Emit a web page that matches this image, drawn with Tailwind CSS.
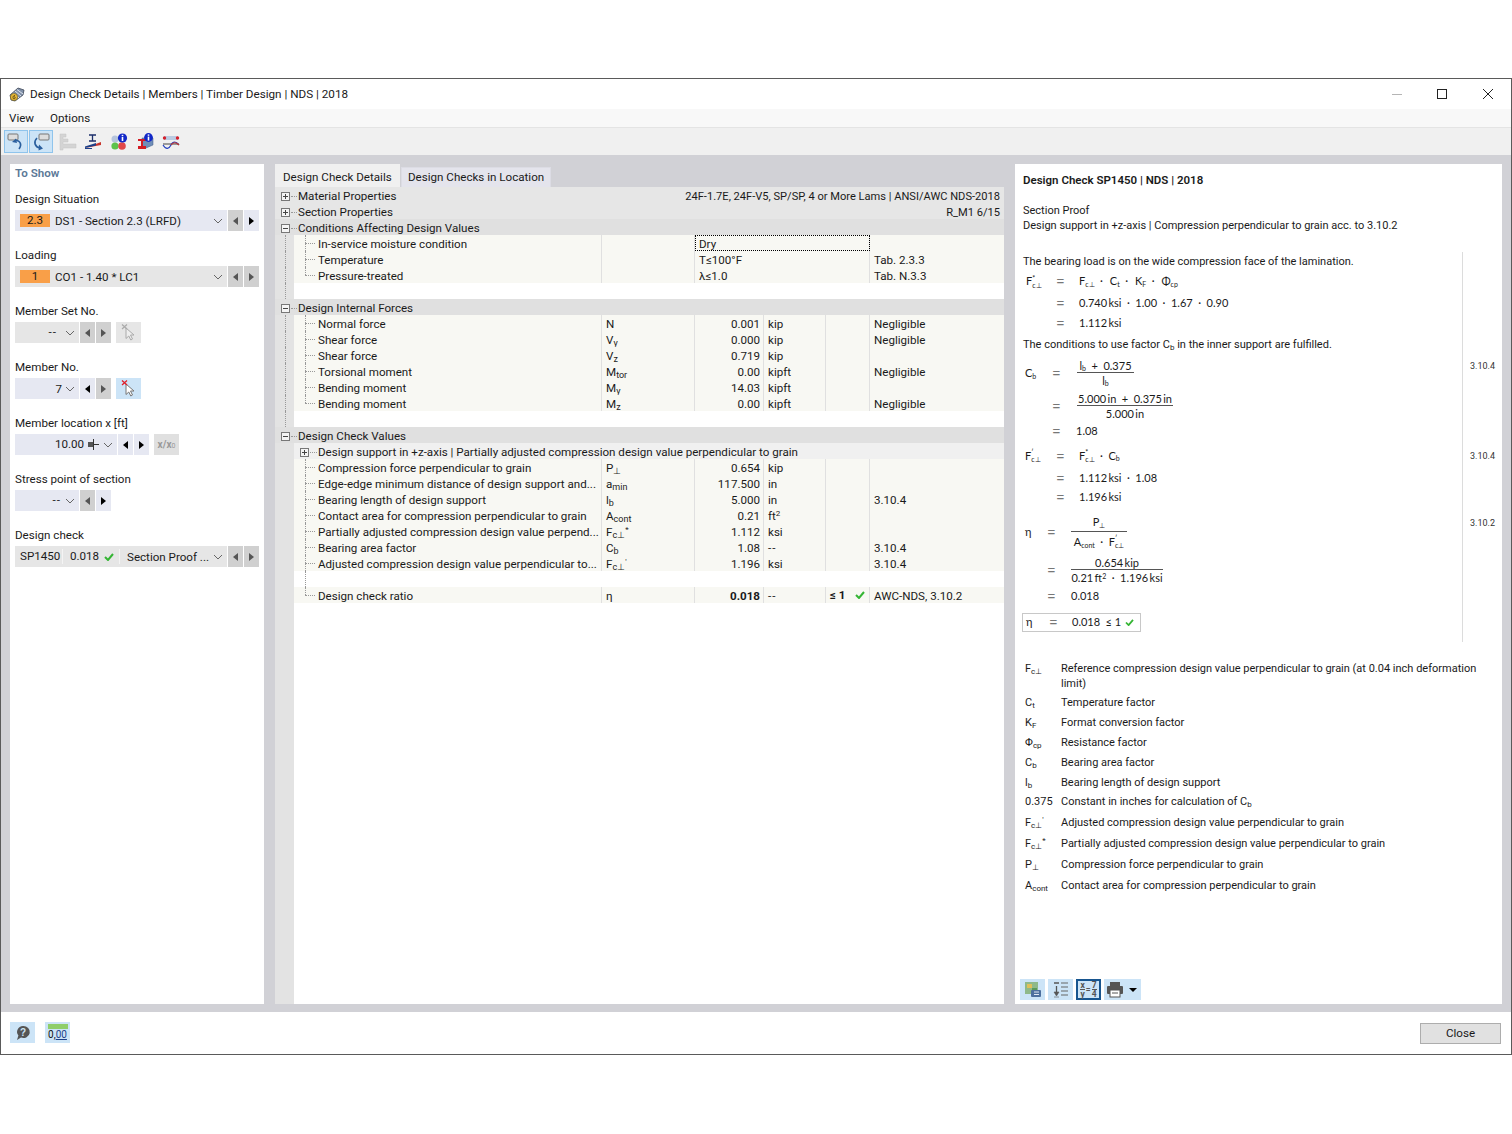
<!DOCTYPE html>
<html lang="en">

<head>
    <meta charset="UTF-8">
    <title>Design Check Details</title>
    <script src="https://cdn.jsdelivr.net/npm/@tailwindcss/browser@4"></script>
</head>

<body class="bg-white h-[1134px] overflow-hidden font-['Roboto',sans-serif] text-[11.6px] text-[#1a1a1a]">
    <div class="mt-[78px] h-[977px] border border-[#5a5a5a] flex flex-col">
        <!-- title bar -->
        <div class="h-[30px] flex items-center bg-white shrink-0">
            <svg class="ml-[8px] mr-[5px]" width="16" height="16" viewBox="0 0 16 16">
                <path d="M1 9 L9 2 L15 4 L14 9 L6 15 L2 14 Z" fill="#7f8fa8" stroke="#3d4657" stroke-width=".8"/>
                <path d="M4 7 L10 12 M6 5 L12 10 M8 3.5 L14 8" stroke="#dfe5ee" stroke-width="1"/>
                <circle cx="5" cy="11" r="3.6" fill="#e8b838" stroke="#6b5a1a" stroke-width=".6"/>
                <path d="M6 9.5 C4.5 9.3 4 10.5 4 11.5 A1.1 1.1 0 1 0 5.2 10.6" fill="none" stroke="#4a3d10" stroke-width=".8"/>
            </svg>
            <span class="text-[11.7px] pt-[2px]">Design Check Details | Members | Timber Design | NDS | 2018</span>
            <div class="ml-auto flex items-center">
                <div class="w-[10px] h-px bg-[#b5b5b5] mr-[35px]"></div>
                <div class="w-[10px] h-[10px] border border-[#222] mr-[36px]"></div>
                <svg class="mr-[18px]" width="10" height="10" viewBox="0 0 10 10"><path d="M0 0 L10 10 M10 0 L0 10" stroke="#222" stroke-width="1"/></svg>
            </div>
        </div>
        <!-- menu -->
        <div class="h-[19px] flex items-center gap-[16px] pl-[8px] pt-[2px] bg-[#f8f8f8] border-b border-[#e4e4e4] shrink-0">
            <span>View</span><span>Options</span>
        </div>
        <!-- toolbar -->
        <div class="h-[27px] flex items-center pl-[3px] bg-[#f0f0f0] shrink-0">
            <div class="w-[24px] h-[23px] bg-[#cce4f7] border border-[#8fc4ec] flex items-center justify-center">
                <svg width="18" height="18" viewBox="0 0 18 18"><rect x="1" y="1" width="10" height="6" rx="1" fill="#ddd" stroke="#777"/><path d="M8 7 C14 8 15 12 12 16" fill="none" stroke="#2a5f9e" stroke-width="1.6"/><path d="M5 9 L9 5.5 L10 10 Z" fill="#2a5f9e"/></svg>
            </div>
            <div class="w-[24px] h-[23px] bg-[#cce4f7] border border-[#8fc4ec] ml-[1px] flex items-center justify-center">
                <svg width="18" height="18" viewBox="0 0 18 18"><rect x="7" y="1" width="10" height="6" rx="1" fill="#ddd" stroke="#777"/><path d="M5 5 C1 9 3 14 8 15" fill="none" stroke="#2a5f9e" stroke-width="1.6"/><path d="M7 11.5 L11 15.5 L6.5 17.5 Z" fill="#2a5f9e"/></svg>
            </div>
            <svg class="ml-[6px]" width="18" height="18" viewBox="0 0 18 18"><path d="M1 1 H7 V4 H4 V6 H9 V9 H4 V11 H17 V15 H4 V17 H1 Z" fill="#d4d4d4" stroke="#c4c4c4" stroke-width=".5"/></svg>
            <svg class="ml-[7px]" width="18" height="18" viewBox="0 0 18 18"><path d="M5 2 H12 M8.5 2 V8 M5 8 H12" stroke="#1c2f6b" stroke-width="1.3" fill="none"/><path d="M1 15 L17 9 V12 L1 15 Z" fill="#c8352c"/><path d="M1 13.5 L12 10 V12.5 L1 15 Z" fill="#1c3f88"/><path d="M1 15.5 H8" stroke="#1c3f88" stroke-width="1"/></svg>
            <svg class="ml-[8px]" width="18" height="18" viewBox="0 0 18 18"><circle cx="5" cy="6" r="3.5" fill="#b5c4dc"/><circle cx="5" cy="13" r="3.6" fill="#5ec24a"/><circle cx="12" cy="13" r="3.8" fill="#e0484a"/><circle cx="12.5" cy="5" r="4.6" fill="#1228c8"/><rect x="11.7" y="4" width="1.6" height="4" fill="#fff"/><rect x="11.7" y="1.8" width="1.6" height="1.4" fill="#fff"/></svg>
            <svg class="ml-[8px]" width="18" height="18" viewBox="0 0 18 18"><path d="M6 5 L17 5 V12 L10 15 H6 Z" fill="#6f8db8" stroke="#3f5a86" stroke-width=".5"/><path d="M2 6 H10 V8 H7 V13 H10 V16 H2 V13 H5 V8 H2 Z" fill="#d41c24"/><circle cx="12.5" cy="4.5" r="4.4" fill="#1228c8"/><rect x="11.7" y="3.6" width="1.6" height="4" fill="#fff"/><rect x="11.7" y="1.4" width="1.6" height="1.4" fill="#fff"/></svg>
            <svg class="ml-[8px]" width="18" height="18" viewBox="0 0 18 18"><rect x="2" y="3" width="14" height="4" fill="#b9cbe2"/><circle cx="2.5" cy="5" r="1.7" fill="#d4202a"/><circle cx="15.5" cy="5" r="1.7" fill="#d4202a"/><path d="M1 11 H17" stroke="#444" stroke-width="1"/><path d="M1 12 C4 17 7 16 9 12 C11 8 14 8 17 12" fill="none" stroke="#2340c0" stroke-width="1.2"/><path d="M9 12 C11 9 14 9 17 12" fill="none" stroke="#c8352c" stroke-width="1.2"/></svg>
        </div>

        <!-- main area -->
        <div class="flex-1 bg-[#d1d1d6] flex pt-[9px] pb-[8px] pl-[9px] pr-[9px] min-h-0">
            <!-- left panel -->
            <div class="w-[254px] bg-white pl-[5px] pr-[5px] shrink-0">
                <div class="h-[18px] flex items-center pt-[2px] text-[#5b7896] font-semibold">To Show</div>
                <div class="h-[6px]"></div>

                <div class="h-[22px] flex items-center pt-[2px]">Design Situation</div>
                <div class="flex h-[21px] mb-[13px]">
                    <div class="w-[212px] bg-[#e6e8f2] flex items-center pl-[5px]">
                        <span class="w-[30px] h-[13px] bg-[#f99f48] flex items-center justify-center pt-px">2.3</span>
                        <span class="ml-[5px] pt-[2px]">DS1 - Section 2.3 (LRFD)</span>
                        <svg class="ml-auto mr-[4px]" width="10" height="6" viewBox="0 0 10 6"><path d="M1 1 L5 5 L9 1" fill="none" stroke="#666"/></svg>
                    </div>
                    <div class="w-[15px] ml-px bg-[#d0d0d0] flex items-center justify-center"><div class="border-y-[4px] border-y-transparent border-r-[5px] border-r-[#555]"></div></div>
                    <div class="w-[15px] ml-px bg-[#e6e8f2] flex items-center justify-center"><div class="border-y-[4px] border-y-transparent border-l-[5px] border-l-black"></div></div>
                </div>

                <div class="h-[22px] flex items-center pt-[2px]">Loading</div>
                <div class="flex h-[21px] mb-[13px]">
                    <div class="w-[212px] bg-[#e6e6e6] flex items-center pl-[5px]">
                        <span class="w-[30px] h-[13px] bg-[#f99f48] flex items-center justify-center pt-px">1</span>
                        <span class="ml-[5px] pt-[2px]">CO1 - 1.40 * LC1</span>
                        <svg class="ml-auto mr-[4px]" width="10" height="6" viewBox="0 0 10 6"><path d="M1 1 L5 5 L9 1" fill="none" stroke="#666"/></svg>
                    </div>
                    <div class="w-[15px] ml-px bg-[#d0d0d0] flex items-center justify-center"><div class="border-y-[4px] border-y-transparent border-r-[5px] border-r-[#555]"></div></div>
                    <div class="w-[15px] ml-px bg-[#d0d0d0] flex items-center justify-center"><div class="border-y-[4px] border-y-transparent border-l-[5px] border-l-[#555]"></div></div>
                </div>

                <div class="h-[22px] flex items-center pt-[2px]">Member Set No.</div>
                <div class="flex h-[21px] mb-[13px]">
                    <div class="w-[64px] bg-[#e6e6e6] flex items-center justify-end pr-[4px]">
                        <span class="mr-[8px] tracking-[1px]">--</span>
                        <svg width="10" height="6" viewBox="0 0 10 6"><path d="M1 1 L5 5 L9 1" fill="none" stroke="#666"/></svg>
                    </div>
                    <div class="w-[15px] ml-px bg-[#d0d0d0] flex items-center justify-center"><div class="border-y-[4px] border-y-transparent border-r-[5px] border-r-[#555]"></div></div>
                    <div class="w-[15px] ml-px bg-[#d0d0d0] flex items-center justify-center"><div class="border-y-[4px] border-y-transparent border-l-[5px] border-l-[#555]"></div></div>
                    <div class="w-[25px] ml-[5px] bg-[#e6e6e6] flex items-center justify-center">
                        <svg width="16" height="17" viewBox="0 0 16 17"><path d="M5 4 L13 11 H9.5 L11.5 15 L9.8 16 L7.8 12 L5 14.5 Z" fill="#eee" stroke="#aaa"/><path d="M1 0.5 L6 5 M6 0.5 L1 5" stroke="#aaa" stroke-width="1.2"/></svg>
                    </div>
                </div>

                <div class="h-[22px] flex items-center pt-[2px]">Member No.</div>
                <div class="flex h-[21px] mb-[13px]">
                    <div class="w-[64px] bg-[#e6e8f2] flex items-center justify-end pr-[4px]">
                        <span class="mr-[3px] pt-[2px]">7</span>
                        <svg width="10" height="6" viewBox="0 0 10 6"><path d="M1 1 L5 5 L9 1" fill="none" stroke="#666"/></svg>
                    </div>
                    <div class="w-[15px] ml-px bg-[#e6e8f2] flex items-center justify-center"><div class="border-y-[4px] border-y-transparent border-r-[5px] border-r-black"></div></div>
                    <div class="w-[15px] ml-px bg-[#d0d0d0] flex items-center justify-center"><div class="border-y-[4px] border-y-transparent border-l-[5px] border-l-[#555]"></div></div>
                    <div class="w-[25px] ml-[5px] bg-[#cce4f7] flex items-center justify-center">
                        <svg width="16" height="17" viewBox="0 0 16 17"><path d="M5 4 L13 11 H9.5 L11.5 15 L9.8 16 L7.8 12 L5 14.5 Z" fill="#fff" stroke="#777"/><path d="M1 0.5 L6 5 M6 0.5 L1 5" stroke="#e0202a" stroke-width="1.3"/></svg>
                    </div>
                </div>

                <div class="h-[22px] flex items-center pt-[2px]">Member location x [ft]</div>
                <div class="flex h-[21px] mb-[13px]">
                    <div class="w-[102px] bg-[#e6e8f2] flex items-center justify-end pr-[4px]">
                        <span class="text-[11.6px] pt-px">10.00</span>
                        <svg class="mx-[4px]" width="11" height="11" viewBox="0 0 11 11"><rect x="0" y="3" width="5" height="5" fill="#555"/><path d="M5 5.5 H11 M5.5 0 V11" stroke="#333"/></svg>
                        <svg width="10" height="6" viewBox="0 0 10 6"><path d="M1 1 L5 5 L9 1" fill="none" stroke="#666"/></svg>
                    </div>
                    <div class="w-[15px] ml-px bg-[#e6e8f2] flex items-center justify-center"><div class="border-y-[4px] border-y-transparent border-r-[5px] border-r-black"></div></div>
                    <div class="w-[15px] ml-px bg-[#e6e8f2] flex items-center justify-center"><div class="border-y-[4px] border-y-transparent border-l-[5px] border-l-black"></div></div>
                    <div class="w-[25px] ml-[5px] bg-[#e0e0e0] flex items-center justify-center text-[10px] text-[#999] font-bold">x/x<span class="text-[7px] relative top-[2px] font-normal">0</span></div>
                </div>

                <div class="h-[22px] flex items-center pt-[2px]">Stress point of section</div>
                <div class="flex h-[21px] mb-[13px]">
                    <div class="w-[64px] bg-[#e6e8f2] flex items-center justify-end pr-[4px]">
                        <span class="mr-[4px] tracking-[1px]">--</span>
                        <svg width="10" height="6" viewBox="0 0 10 6"><path d="M1 1 L5 5 L9 1" fill="none" stroke="#666"/></svg>
                    </div>
                    <div class="w-[15px] ml-px bg-[#d0d0d0] flex items-center justify-center"><div class="border-y-[4px] border-y-transparent border-r-[5px] border-r-[#555]"></div></div>
                    <div class="w-[15px] ml-px bg-[#e6e8f2] flex items-center justify-center"><div class="border-y-[4px] border-y-transparent border-l-[5px] border-l-black"></div></div>
                </div>

                <div class="h-[22px] flex items-center pt-[2px]">Design check</div>
                <div class="flex h-[21px]">
                    <div class="w-[212px] bg-[#e6e6e6] flex items-center">
                        <span class="w-[48px] h-[15px] pl-[5px] pt-px flex items-center border-r border-[#f4f4f4]">SP1450</span>
                        <span class="w-[57px] h-[15px] pl-[7px] pt-px flex items-center border-r border-[#f4f4f4]">0.018
                            <svg class="ml-[5px]" width="10" height="8" viewBox="0 0 10 8"><path d="M1 4 L4 7 L9 1" fill="none" stroke="#35b534" stroke-width="2"/></svg>
                        </span>
                        <span class="ml-[7px] pt-[2px]">Section Proof ...</span>
                        <svg class="ml-auto mr-[4px]" width="10" height="6" viewBox="0 0 10 6"><path d="M1 1 L5 5 L9 1" fill="none" stroke="#666"/></svg>
                    </div>
                    <div class="w-[15px] ml-px bg-[#d0d0d0] flex items-center justify-center"><div class="border-y-[4px] border-y-transparent border-r-[5px] border-r-[#555]"></div></div>
                    <div class="w-[15px] ml-px bg-[#d0d0d0] flex items-center justify-center"><div class="border-y-[4px] border-y-transparent border-l-[5px] border-l-[#555]"></div></div>
                </div>
            </div>

            <!-- center panel -->
            <div class="w-[729px] ml-[11px] flex flex-col shrink-0">
                <div class="h-[23px] flex items-end shrink-0">
                    <div class="w-[125px] h-[23px] bg-[#f0f0f0] flex items-center pl-[8px] pt-[4px]">Design Check Details</div>
                    <div class="w-[150px] h-[20px] ml-px bg-[#e4e4ec] border border-b-0 border-[#dcdce4] flex items-center pl-[6px]">Design Checks in Location</div>
                </div>
                <div class="flex-1 bg-white relative min-h-0" id="tree">
                    <div class="absolute left-0 top-0 bottom-0 w-[19px] bg-[#e3e3e3]"></div>
                </div>
            </div>

            <!-- right panel -->
            <div class="w-[487px] ml-[11px] bg-white flex flex-col shrink-0 relative text-[11px]">
                <div class="h-[24px] pt-[8px] pl-[8px] leading-[16px] text-[11.5px] font-semibold">Design Check SP1450 | NDS | 2018</div>
                <div class="h-[15px] mt-[15px] pl-[8px] leading-[16px]">Section Proof</div>
                <div class="h-[15px] pl-[8px] leading-[15px]">Design support in +z-axis | Compression perpendicular to grain acc. to 3.10.2</div>

                <!-- formula block -->
                <div class="mt-[19px] flex h-[390px] shrink-0">
                    <div class="w-[448px] border-r border-[#dcdcdc] font-['Lato',sans-serif] text-[11px]" id="math">
                        <div class="h-[19px] pl-[8px] pt-px flex items-center font-['Roboto',sans-serif]">The bearing load is on the wide compression face of the lamination.</div>
                        <div class="h-[21px] flex items-center"><span class="w-[10px]"></span><span class="w-[31px] pl-[1px] flex items-center">F<span class="inline-flex flex-col text-[7px] leading-[7px]"><span>*</span><span>c⊥</span></span></span><span class="w-[23px] text-[#777] text-[15px]">=</span><span>F<sub class="text-[7px]">c⊥</sub>&ensp;·&ensp;&thinsp;C<sub class="text-[7px]">t</sub>&ensp;·&ensp;&thinsp;K<sub class="text-[7px]">F</sub>&ensp;·&ensp;&thinsp;Φ<sub class="text-[7px]">cp</sub></span></div>
                        <div class="h-[22px] flex items-center"><span class="w-[41px]"></span><span class="w-[23px] text-[#777] text-[15px]">=</span><span>0.740&thinsp;ksi&ensp;·&ensp;1.00&ensp;·&ensp;1.67&ensp;·&ensp;0.90</span></div>
                        <div class="h-[18px] flex items-center"><span class="w-[41px]"></span><span class="w-[23px] text-[#777] text-[15px]">=</span><span>1.112&thinsp;ksi</span></div>
                        <div class="h-[24px] pl-[8px] pt-[2px] flex items-center font-['Roboto',sans-serif]"><span>The conditions to use factor C<sub class="text-[8px]">b</sub> in the inner support are fulfilled.</span></div>
                        <div class="h-[34px] flex items-center"><span class="w-[10px]"></span><span class="w-[27px]">C<sub class="text-[7px]">b</sub></span><span class="w-[25px] text-[#777] text-[15px]">=</span>
                            <span class="flex flex-col items-center w-[57px]"><span class="h-[14px] leading-[14px] w-full border-b border-[#555] text-center">l<sub class="text-[7px]">b</sub>&ensp;+&ensp;0.375</span><span class="h-[15px] leading-[16px]">l<sub class="text-[7px]">b</sub></span></span></div>
                        <div class="h-[32px] flex items-center"><span class="w-[37px]"></span><span class="w-[25px] text-[#777] text-[15px]">=</span>
                            <span class="flex flex-col items-center w-[96px]"><span class="h-[14px] leading-[14px] w-full border-b border-[#555] text-center whitespace-nowrap">5.000&thinsp;in&ensp;+&ensp;0.375&thinsp;in</span><span class="h-[15px] leading-[16px]">5.000&thinsp;in</span></span></div>
                        <div class="h-[18px] flex items-center"><span class="w-[37px]"></span><span class="w-[24px] text-[#777] text-[15px]">=</span><span>1.08</span></div>
                        <div class="h-[32px] flex items-center"><span class="w-[10px]"></span><span class="w-[31px] flex items-center">F<span class="inline-flex flex-col text-[7px] leading-[7px]"><span>′</span><span>c⊥</span></span></span><span class="w-[23px] text-[#777] text-[15px]">=</span><span class="flex items-center">F<span class="inline-flex flex-col text-[7px] leading-[7px]"><span>*</span><span>c⊥</span></span>&ensp;·&ensp;C<sub class="text-[7px]">b</sub></span></div>
                        <div class="h-[13px] flex items-center"><span class="w-[41px]"></span><span class="w-[23px] text-[#777] text-[15px]">=</span><span>1.112&thinsp;ksi&ensp;·&ensp;1.08</span></div>
                        <div class="h-[24px] flex items-center"><span class="w-[41px]"></span><span class="w-[23px] text-[#777] text-[15px]">=</span><span>1.196&thinsp;ksi</span></div>
                        <div class="h-[46px] flex items-center"><span class="w-[10px]"></span><span class="w-[22px]">η</span><span class="w-[24px] text-[#777] text-[15px]">=</span>
                            <span class="flex flex-col items-center w-[56px]"><span class="h-[20px] leading-[20px] w-full border-b border-[#555] text-center">P<sub class="text-[7px]">⊥</sub></span><span class="h-[20px] flex items-center whitespace-nowrap">A<sub class="text-[7px] mt-[3px]">cont</sub>&ensp;·&ensp;F<span class="inline-flex flex-col text-[7px] leading-[7px]"><span>′</span><span>c⊥</span></span></span></span></div>
                        <div class="h-[31px] flex items-center"><span class="w-[32px]"></span><span class="w-[24px] text-[#777] text-[15px]">=</span>
                            <span class="flex flex-col items-center w-[92px]"><span class="h-[14px] leading-[14px] w-full border-b border-[#555] text-center">0.654&thinsp;kip</span><span class="h-[15px] leading-[16px] whitespace-nowrap">0.21&thinsp;ft<sup class="text-[7px]">2</sup>&ensp;·&ensp;1.196&thinsp;ksi</span></span></div>
                        <div class="h-[20px] flex items-center"><span class="w-[32px]"></span><span class="w-[24px] text-[#777] text-[15px]">=</span><span>0.018</span></div>
                        <div class="mt-[7px] ml-[7px] w-[119px] h-[19px] border border-[#c8c8c8] flex items-center"><span class="w-[26px] pl-[3px]">η</span><span class="w-[23px] text-[#777] text-[15px]">=</span><span>0.018&ensp;≤ 1</span>
                            <svg class="ml-[4px]" width="9" height="7" viewBox="0 0 10 8"><path d="M1 4 L4 7 L9 1" fill="none" stroke="#35b534" stroke-width="2"/></svg></div>
                    </div>
                    <div class="relative flex-1 text-[9px] text-[#333]">
                        <span class="absolute left-[7px] top-[108px]">3.10.4</span>
                        <span class="absolute left-[7px] top-[198px]">3.10.4</span>
                        <span class="absolute left-[7px] top-[265px]">3.10.2</span>
                    </div>
                </div>

                <!-- legend -->
                <div class="mt-[19px] leading-[15px]">
                    <div class="flex h-[31px]"><span class="w-[46px] pl-[10px] shrink-0">F<sub class="text-[8px]">c⊥</sub></span><span>Reference compression design value perpendicular to grain (at 0.04 inch deformation<br>limit)</span></div>
                    <div class="flex items-center h-[20px]"><span class="w-[46px] pl-[10px] shrink-0">C<sub class="text-[8px]">t</sub></span><span>Temperature factor</span></div>
                    <div class="flex items-center h-[20px]"><span class="w-[46px] pl-[10px] shrink-0">K<sub class="text-[8px]">F</sub></span><span>Format conversion factor</span></div>
                    <div class="flex items-center h-[20px]"><span class="w-[46px] pl-[10px] shrink-0">Φ<sub class="text-[8px]">cp</sub></span><span>Resistance factor</span></div>
                    <div class="flex items-center h-[20px]"><span class="w-[46px] pl-[10px] shrink-0">C<sub class="text-[8px]">b</sub></span><span>Bearing area factor</span></div>
                    <div class="flex items-center h-[20px]"><span class="w-[46px] pl-[10px] shrink-0">l<sub class="text-[8px]">b</sub></span><span>Bearing length of design support</span></div>
                    <div class="flex items-center h-[19px]"><span class="w-[46px] pl-[10px] shrink-0">0.375</span><span>Constant in inches for calculation of C<sub class="text-[8px]">b</sub></span></div>
                    <div class="flex items-center h-[22px]"><span class="w-[46px] pl-[10px] shrink-0">F<sub class="text-[8px]">c⊥</sub><sup class="text-[8px]">′</sup></span><span>Adjusted compression design value perpendicular to grain</span></div>
                    <div class="flex items-center h-[20px]"><span class="w-[46px] pl-[10px] shrink-0">F<sub class="text-[8px]">c⊥</sub><sup class="text-[8px]">*</sup></span><span>Partially adjusted compression design value perpendicular to grain</span></div>
                    <div class="flex items-center h-[22px]"><span class="w-[46px] pl-[10px] shrink-0">P<sub class="text-[8px]">⊥</sub></span><span>Compression force perpendicular to grain</span></div>
                    <div class="flex items-center h-[20px]"><span class="w-[46px] pl-[10px] shrink-0">A<sub class="text-[8px]">cont</sub></span><span>Contact area for compression perpendicular to grain</span></div>
                </div>

                <!-- bottom icons -->
                <div class="mt-auto mb-[4px] ml-[5px] flex gap-[3px] h-[21px]">
                    <div class="w-[25px] bg-[#cce4f7] flex items-center justify-center">
                        <svg width="18" height="18" viewBox="0 0 18 18"><rect x="1" y="1" width="13" height="12" fill="#8fb98a"/><rect x="3" y="3" width="5" height="4" fill="#e0c05a"/><rect x="8" y="7" width="5" height="5" fill="#5a9a5a"/><rect x="7" y="9" width="10" height="7" rx="1" fill="#4d6f9e"/><path d="M10 11 H15 M10 13.5 H15" stroke="#dfe7f2"/></svg>
                    </div>
                    <div class="w-[25px] bg-[#cce4f7] flex items-center justify-center">
                        <svg width="16" height="16" viewBox="0 0 16 16"><path d="M8 1 H15 M8 5 H15 M8 9 H15 M8 13 H15" stroke="#666" stroke-width="1.2"/><path d="M1 1 H6 M3.5 4 V12" stroke="#555" stroke-width="1.3"/><path d="M1 10 H6 L3.5 14 Z M1 15 H6" fill="#555" stroke="#555" stroke-width=".6"/></svg>
                    </div>
                    <div class="w-[25px] bg-[#cce4f7] border-2 border-[#17558f] flex items-center justify-center font-bold text-[#555] text-[8.5px] leading-[8px]">
                        <span class="flex flex-col items-center"><span>x</span><span class="border-t border-[#555]">y</span></span><span class="mx-px">=</span><span class="flex flex-col items-center"><span>7</span><span class="border-t border-[#555]">4</span></span>
                    </div>
                    <div class="w-[37px] bg-[#cce4f7] flex items-center pl-[2px]">
                        <svg width="18" height="17" viewBox="0 0 18 17"><rect x="4" y="1" width="10" height="4" fill="#555"/><rect x="1" y="5" width="16" height="8" rx="1" fill="#555"/><rect x="4" y="9" width="10" height="7" fill="#fff" stroke="#555"/><path d="M6 12 H12" stroke="#555"/></svg>
                        <div class="ml-[5px] border-x-[4px] border-x-transparent border-t-[4px] border-t-black"></div>
                    </div>
                </div>
            </div>
        </div>

        <!-- footer -->
        <div class="h-[42px] bg-white shrink-0 flex items-center pl-[9px] pr-[10px]">
            <div class="w-[25px] h-[21px] -mt-px bg-[#cce4f7] flex items-center justify-center">
                <svg width="16" height="16" viewBox="0 0 16 16"><path d="M8 1 A6.5 6 0 1 1 6 12.6 L2 15 L3.4 10.6 A6.5 6 0 0 1 8 1 Z" fill="#555"/><text x="8" y="11" text-anchor="middle" font-size="10" font-weight="bold" fill="#cce4f7" font-family="Liberation Sans">?</text></svg>
            </div>
            <div class="w-[25px] h-[21px] -mt-px ml-[10px] bg-[#cce4f7] flex flex-col items-center pt-[2px]">
                <div class="w-[20px] h-[5px] bg-[#8fce6a]"></div>
                <div class="text-[10px] leading-[12px] text-[#111]">0,<span class="text-[#1c3f88] underline">00</span></div>
            </div>
            <div class="ml-auto w-[81px] h-[21px] bg-[#e1e1e1] border border-[#adadad] flex items-center justify-center pt-[2px]">Close</div>
        </div>
    </div>

    <script>
        const sub = t => `<span class="text-[9px] relative top-[2px]">${t}</span>`;
        const check = `<svg width="10" height="8" viewBox="0 0 10 8"><path d="M1 4 L4 7 L9 1" fill="none" stroke="#35b534" stroke-width="2"/></svg>`;
        const tree = document.getElementById('tree');
        const gutterLine = `<div class="ml-[10px] h-full border-l border-dotted border-[#999]"></div>`;

        function box(sign) {
            return `<div class="w-[9px] h-[9px] border border-[#777] bg-[#f4f4f4] relative shrink-0">
                <div class="absolute left-[1px] right-[1px] top-[3px] h-px bg-[#444]"></div>
                ${sign === '+' ? '<div class="absolute top-[1px] bottom-[1px] left-[3px] w-px bg-[#444]"></div>' : ''}
            </div>`;
        }

        function add(html) {
            const d = document.createElement('div');
            d.className = 'relative flex h-[16px] leading-[18px] whitespace-nowrap';
            d.innerHTML = html;
            tree.appendChild(d);
        }

        function head(label, sign, right, bg) {
            add(`<div class="flex-1 flex items-center ${bg || 'bg-[#e6e6e6]'} pl-[6px] pr-[4px] pt-[2px] h-[16px]">${box(sign)}
                <div class="w-[6px] ml-px border-t border-dotted border-[#999] mr-px"></div><span>${label}</span>
                <span class="ml-auto text-[11.1px] pt-px">${right || ''}</span></div>`);
        }

        function subLine(last) {
            return `<div class="w-[22px] h-full shrink-0 relative">
                <div class="absolute left-[11px] top-0 ${last ? 'h-[8px]' : 'h-[16px]'} border-l border-dotted border-[#999]"></div>
                <div class="absolute left-[11px] top-[8px] w-[10px] border-t border-dotted border-[#999]"></div></div>`;
        }

        function row(label, sym, val, unit, le, note, opts = {}) {
            const text = opts.wide
                ? `<div class="w-[175px] border-r border-[#e0e0e0] pl-[4px] ${opts.focus ? 'outline outline-1 outline-dotted outline-black -outline-offset-1 bg-[#f8f8f3]' : ''}">${val}</div>`
                : `<div class="w-[69px] border-r border-[#e0e0e0] text-right pr-[3px] ${opts.bold ? 'font-bold' : ''}">${val}</div>
                   <div class="w-[62px] border-r border-[#e0e0e0] pl-[4px] ${unit === '--' ? 'tracking-[1px]' : ''}">${unit}</div>
                   <div class="w-[44px] border-r border-[#e0e0e0] pl-[4px] flex items-center">${le}</div>`;
            add(`<div class="w-[19px] shrink-0">${opts.noGutter ? '' : gutterLine}</div>
                <div class="flex-1 flex bg-[#f8f8f3]">${subLine(opts.last)}
                    <div class="w-[286px] pl-[2px] border-r border-[#e0e0e0]">${label}</div>
                    <div class="w-[93px] border-r border-[#e0e0e0] pl-[4px]">${sym}</div>
                    ${text}
                    <div class="flex-1 pl-[4px]">${note}</div>
                </div>`);
        }

        function blank(opts = {}) {
            add(`<div class="w-[19px] shrink-0">${opts.noGutter ? '' : gutterLine}</div>
                <div class="flex-1 bg-white relative">${opts.sub ? '<div class="absolute left-[11px] top-0 h-[16px] border-l border-dotted border-[#999]"></div>' : ''}</div>`);
        }

        head('Material Properties', '+', '24F-1.7E, 24F-V5, SP/SP, 4 or More Lams | ANSI/AWC NDS-2018');
        head('Section Properties', '+', 'R_M1 6/15');
        head('Conditions Affecting Design Values', '-', '', 'bg-[#e0e0e0]');
        row('In-service moisture condition', '', 'Dry', '', '', '', { wide: true, focus: true });
        row('Temperature', '', 'T≤100°F', '', '', 'Tab. 2.3.3', { wide: true });
        row('Pressure-treated', '', 'λ≤1.0', '', '', 'Tab. N.3.3', { wide: true, last: true });
        blank();
        head('Design Internal Forces', '-', '', 'bg-[#e0e0e0]');
        row('Normal force', 'N', '0.001', 'kip', '', 'Negligible');
        row('Shear force', 'V' + sub('y'), '0.000', 'kip', '', 'Negligible');
        row('Shear force', 'V' + sub('z'), '0.719', 'kip', '', '');
        row('Torsional moment', 'M' + sub('tor'), '0.00', 'kipft', '', 'Negligible');
        row('Bending moment', 'M' + sub('y'), '14.03', 'kipft', '', '');
        row('Bending moment', 'M' + sub('z'), '0.00', 'kipft', '', 'Negligible', { last: true });
        blank();
        head('Design Check Values', '-', '', 'bg-[#e0e0e0]');
        add(`<div class="w-[19px] shrink-0"></div>
            <div class="flex-1 flex items-center bg-[#f0f0f0] pl-[6px] pt-[2px] h-[16px]">${box('+')}
                <div class="w-[7px] ml-px mr-[1px] border-t border-dotted border-[#999]"></div>
                <span>Design support in +z-axis | Partially adjusted compression design value perpendicular to grain</span></div>`);
        const g = { noGutter: true };
        row('Compression force perpendicular to grain', 'P' + sub('⊥'), '0.654', 'kip', '', '', g);
        row('Edge-edge minimum distance of design support and...', 'a' + sub('min'), '117.500', 'in', '', '', g);
        row('Bearing length of design support', 'l' + sub('b'), '5.000', 'in', '', '3.10.4', g);
        row('Contact area for compression perpendicular to grain', 'A' + sub('cont'), '0.21', 'ft<sup class="text-[8px]">2</sup>', '', '', g);
        row('Partially adjusted compression design value perpend...', 'F' + sub('c⊥') + '<sup class="text-[8px]">*</sup>', '1.112', 'ksi', '', '', g);
        row('Bearing area factor', 'C' + sub('b'), '1.08', '--', '', '3.10.4', g);
        row('Adjusted compression design value perpendicular to...', 'F' + sub('c⊥') + '<sup class="text-[8px]">\'</sup>', '1.196', 'ksi', '', '3.10.4', g);
        blank({ noGutter: true, sub: true });
        row('Design check ratio', 'η', '0.018', '--', '<b>≤ 1</b><span class="ml-[10px]">' + check + '</span>', 'AWC-NDS, 3.10.2', { noGutter: true, last: true, bold: true });
    </script>
</body>

</html>
